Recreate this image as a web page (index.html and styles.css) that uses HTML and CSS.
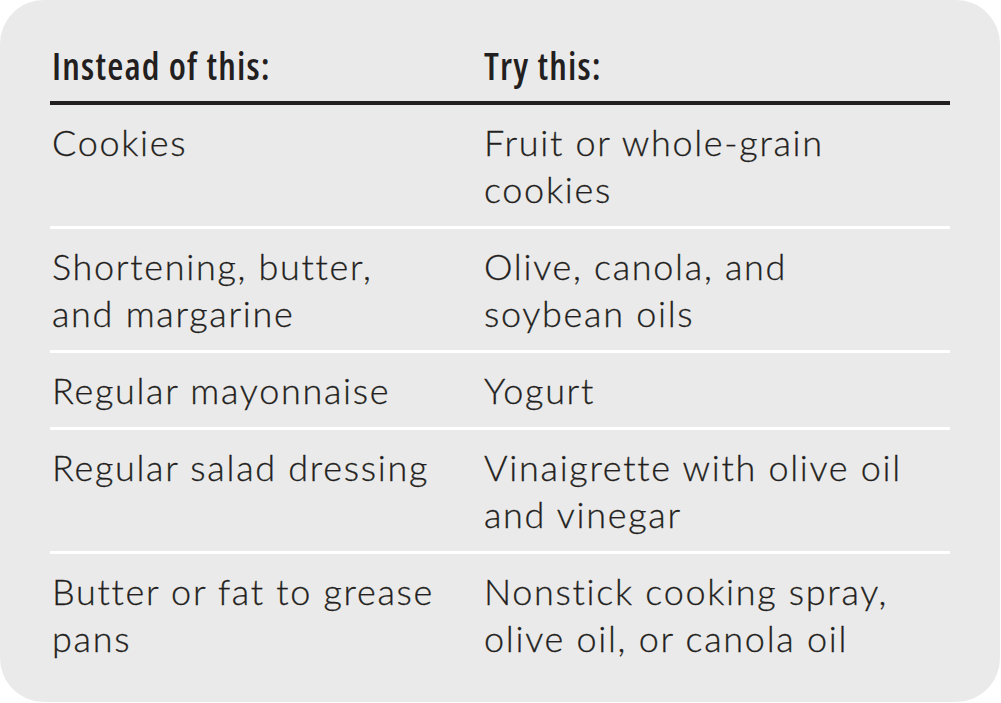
FILE: index.html
```html
<!DOCTYPE html>
<html>
<head>
<meta charset="utf-8">
<link rel="stylesheet" href="styles.css">
</head>
<body>
<div class="card">
  <table class="swap">
    <thead>
      <tr>
        <th class="c1">Instead of this:</th>
        <th class="c2">Try this:</th>
      </tr>
    </thead>
    <tbody>
      <tr>
        <td class="c1">Cookies</td>
        <td class="c2">Fruit or whole-grain<br>cookies</td>
      </tr>
      <tr>
        <td class="c1">Shortening, butter,<br>and margarine</td>
        <td class="c2">Olive, canola, and<br>soybean oils</td>
      </tr>
      <tr>
        <td class="c1">Regular mayonnaise</td>
        <td class="c2">Yogurt</td>
      </tr>
      <tr>
        <td class="c1">Regular salad dressing</td>
        <td class="c2">Vinaigrette with olive oil<br>and vinegar</td>
      </tr>
      <tr>
        <td class="c1">Butter or fat to grease<br>pans</td>
        <td class="c2">Nonstick cooking spray,<br>olive oil, or canola oil</td>
      </tr>
    </tbody>
  </table>
</div>
</body>
</html>
```

FILE: styles.css
```css
html, body {
  margin: 0;
  padding: 0;
  background: #ffffff;
}

.card {
  box-sizing: border-box;
  width: 1000px;
  height: 702px;
  background: #ebeaea;
  border-radius: 44px;
  padding: 44px 50px 0 50px;
}

.swap {
  width: 900px;
  border-collapse: collapse;
  table-layout: fixed;
  color: #231f20;
}

.swap th {
  font-family: "Open Sans", "DejaVu Sans Condensed", sans-serif;
  font-stretch: 84%;
  font-weight: 650;
  font-size: 37px;
  line-height: 44px;
  letter-spacing: 1.2px;
  text-align: left;
  padding: 0 0 13px 0;
  border-bottom: 4px solid #231f20;
}

.swap td {
  font-family: Lato, "Open Sans", sans-serif;
  font-weight: 300;
  font-size: 36px;
  line-height: 47px;
  letter-spacing: 1.7px;
  vertical-align: top;
  padding: 14px 0 13px 0;
  -webkit-text-stroke: 0.3px #231f20;
}

.swap tbody tr + tr td {
  border-top: 3px solid #ffffff;
}

.swap .c1 {
  width: 432px;
  padding-left: 2px;
}

.swap .c2 {
  padding-left: 0;
}
```
